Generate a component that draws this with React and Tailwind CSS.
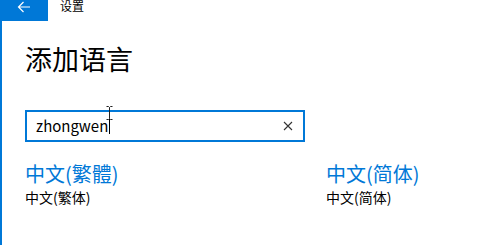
import React from 'react';

const font = { fontFamily: '"Noto Sans CJK SC", "Noto Sans", sans-serif' };

function Result({ title, sub }) {
  return (
    <div className="flex flex-col">
      <div className="text-[20px] leading-[24px] text-[#0078d7]">{title}</div>
      <div className="mt-[3px] text-[14px] leading-[17px] text-black">{sub}</div>
    </div>
  );
}

export default function App() {
  return (
    <div className="h-[245px] w-[488px] overflow-hidden bg-white" style={font}>
      <div className="flex h-[21px] items-start">
        <div className="flex h-[21px] w-[48px] justify-center bg-[#0078d7] pt-[1px]">
          <svg width="14" height="12" viewBox="0 0 14 12" fill="none" stroke="white" strokeWidth="1.2">
            <path d="M13 6H1.5M6.5 1L1.5 6l5 5" />
          </svg>
        </div>
        <div className="ml-[12px] text-[12px] leading-[12px] text-black">设置</div>
      </div>
      <div className="flex h-[224px]">
        <div className="w-[2px] bg-[#0078d7]" />
        <div className="flex flex-1 flex-col pl-[23px]">
          <div className="mt-[21px] text-[27px] leading-[34px] text-black">添加语言</div>
          <div className="relative mt-[34px] flex h-[32px] w-[280px] items-center border-2 border-[#0078d7] pl-[9px] pr-[10px]">
            <span className="text-[15px] leading-[18px] text-black">zhongwen</span>
            <span className="ml-[1px] h-[15px] w-px bg-black" />
            <svg className="ml-auto" width="10" height="10" viewBox="0 0 10 10" stroke="#333" strokeWidth="1.1">
              <path d="M1 1l8 8M9 1l-8 8" />
            </svg>
            <svg className="absolute left-[79px] top-[-6px]" width="7" height="14" viewBox="0 0 7 14" fill="none" stroke="#222" strokeWidth="1">
              <path d="M0.5 0.5h2l1 1 1-1h2M3.5 1.5v11M0.5 13.5h2l1-1 1 1h2" />
            </svg>
          </div>
          <div className="mt-[20px] flex">
            <div className="w-[301px]">
              <Result title="中文(繁體)" sub="中文(繁体)" />
            </div>
            <Result title="中文(简体)" sub="中文(简体)" />
          </div>
        </div>
      </div>
    </div>
  );
}
